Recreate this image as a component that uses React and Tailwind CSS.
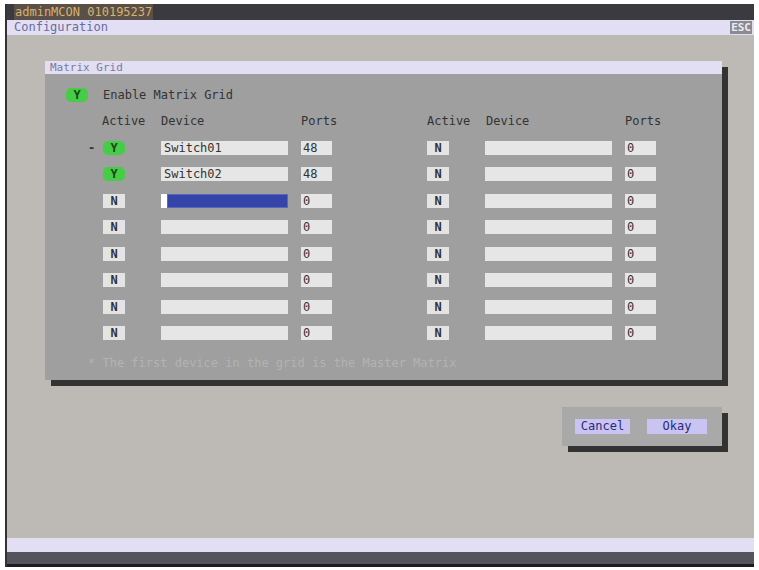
import React from 'react';

const mono = { fontFamily: '"DejaVu Sans Mono", "Liberation Mono", monospace' };

const leftRows = [
  { active: 'Y', device: 'Switch01', ports: '48', master: true },
  { active: 'Y', device: 'Switch02', ports: '48' },
  { active: 'N', device: '', ports: '0', editing: true },
  { active: 'N', device: '', ports: '0' },
  { active: 'N', device: '', ports: '0' },
  { active: 'N', device: '', ports: '0' },
  { active: 'N', device: '', ports: '0' },
  { active: 'N', device: '', ports: '0' },
];

const ActiveBox = ({ value }) =>
  value === 'Y' ? (
    <div className="w-[22px] h-[14px] rounded-[5px] bg-[#46cc46] text-[#174a17] font-bold flex items-center justify-center">Y</div>
  ) : (
    <div className="w-[22px] h-[14px] bg-[#e4e4e4] text-[#333] font-bold flex items-center justify-center">N</div>
  );

const DeviceField = ({ value, editing }) =>
  editing ? (
    <div className="w-[127px] h-[14px] flex">
      <div className="w-[6px] h-full bg-white" />
      <div className="flex-1 h-full bg-[#3444a8] border border-[#5a66c0]" />
    </div>
  ) : (
    <div className="w-[127px] h-[14px] bg-[#e6e6e6] text-[#333] pl-[3px] leading-[14px]">{value}</div>
  );

const PortsField = ({ value }) => (
  <div className="w-[31px] h-[14px] bg-[#e6e6e6] text-[#333] pl-[2px] leading-[14px]">{value}</div>
);

const App = () => {
  return (
    <div className="w-[759px] h-[570px] bg-white pt-[4px] pl-[5px] pr-[5px] pb-[3px] text-[12px]" style={mono}>
      <div className="h-full flex flex-col border-l-2 border-[#333]">
        {/* Title bar */}
        <div className="h-[16px] bg-[#3a3a3f] flex items-center">
          <span className="ml-[7px] px-[1px] bg-[#5a5048] text-[#d9b26e] leading-[16px]">adminMCON 010195237</span>
        </div>

        {/* Menu bar */}
        <div className="h-[15px] bg-[#e2def3] flex items-center justify-between">
          <span className="ml-[7px] text-[#6b6ba2] leading-[15px]">Configuration</span>
          <span className="mr-[2px] px-[1px] bg-[#8a8a92] text-[#ececf2] font-bold text-[11px] leading-[13px]">ESC</span>
        </div>

        {/* Body */}
        <div className="flex-1 bg-[#bdb9b4] pt-[26px] pl-[38px]">
          <div className="w-[677px] flex flex-col">
            {/* Matrix Grid panel */}
            <div className="shadow-[6px_6px_0_#333]">
              <div className="h-[13px] bg-[#e2def3] text-[#7a7a9c] text-[11px] leading-[13px] pl-[5px]">Matrix Grid</div>
              <div className="h-[306px] bg-[#9f9f9f] pt-[14px]">
                <div className="flex items-center h-[14px] pl-[21px]">
                  <ActiveBox value="Y" />
                  <span className="ml-[15px] text-[#333]">Enable Matrix Grid</span>
                </div>

                {/* Header */}
                <div className="mt-[6px] h-[26.5px] flex items-center text-[#333]">
                  <span className="ml-[57px] w-[59px]">Active</span>
                  <span className="w-[140px]">Device</span>
                  <span className="w-[126px]">Ports</span>
                  <span className="w-[59px]">Active</span>
                  <span className="w-[139px]">Device</span>
                  <span>Ports</span>
                </div>

                {leftRows.map((row, i) => (
                  <div key={i} className="h-[26.5px] flex items-center">
                    <span className="w-[58px] pl-[43px] text-[#333] font-bold">{row.master ? '-' : ''}</span>
                    <ActiveBox value={row.active} />
                    <div className="ml-[36px]">
                      <DeviceField value={row.device} editing={row.editing} />
                    </div>
                    <div className="ml-[13px]">
                      <PortsField value={row.ports} />
                    </div>
                    <div className="ml-[95px]">
                      <ActiveBox value="N" />
                    </div>
                    <div className="ml-[36px]">
                      <DeviceField value="" />
                    </div>
                    <div className="ml-[13px]">
                      <PortsField value="0" />
                    </div>
                  </div>
                ))}

                <div className="mt-[7px] pl-[43px] text-[#b3b3b3]">* The first device in the grid is the Master Matrix</div>
              </div>
            </div>

            {/* Buttons */}
            <div className="self-end mt-[27px] w-[160px] h-[39px] bg-[#a9a9a9] shadow-[6px_6px_0_#333] flex items-center pl-[13px] gap-[17px]">
              <button className="w-[55px] h-[15px] bg-[#c9c4f2] text-[#2a2a7c] leading-[15px]">Cancel</button>
              <button className="w-[60px] h-[15px] bg-[#c9c4f2] text-[#2a2a7c] leading-[15px]">Okay</button>
            </div>
          </div>
        </div>

        {/* Bottom bars */}
        <div className="h-[14px] bg-[#e2def3]" />
        <div className="h-[15px] bg-[#55545c] border-b-[3px] border-[#1c1c1c]" />
      </div>
    </div>
  );
};

export default App;
